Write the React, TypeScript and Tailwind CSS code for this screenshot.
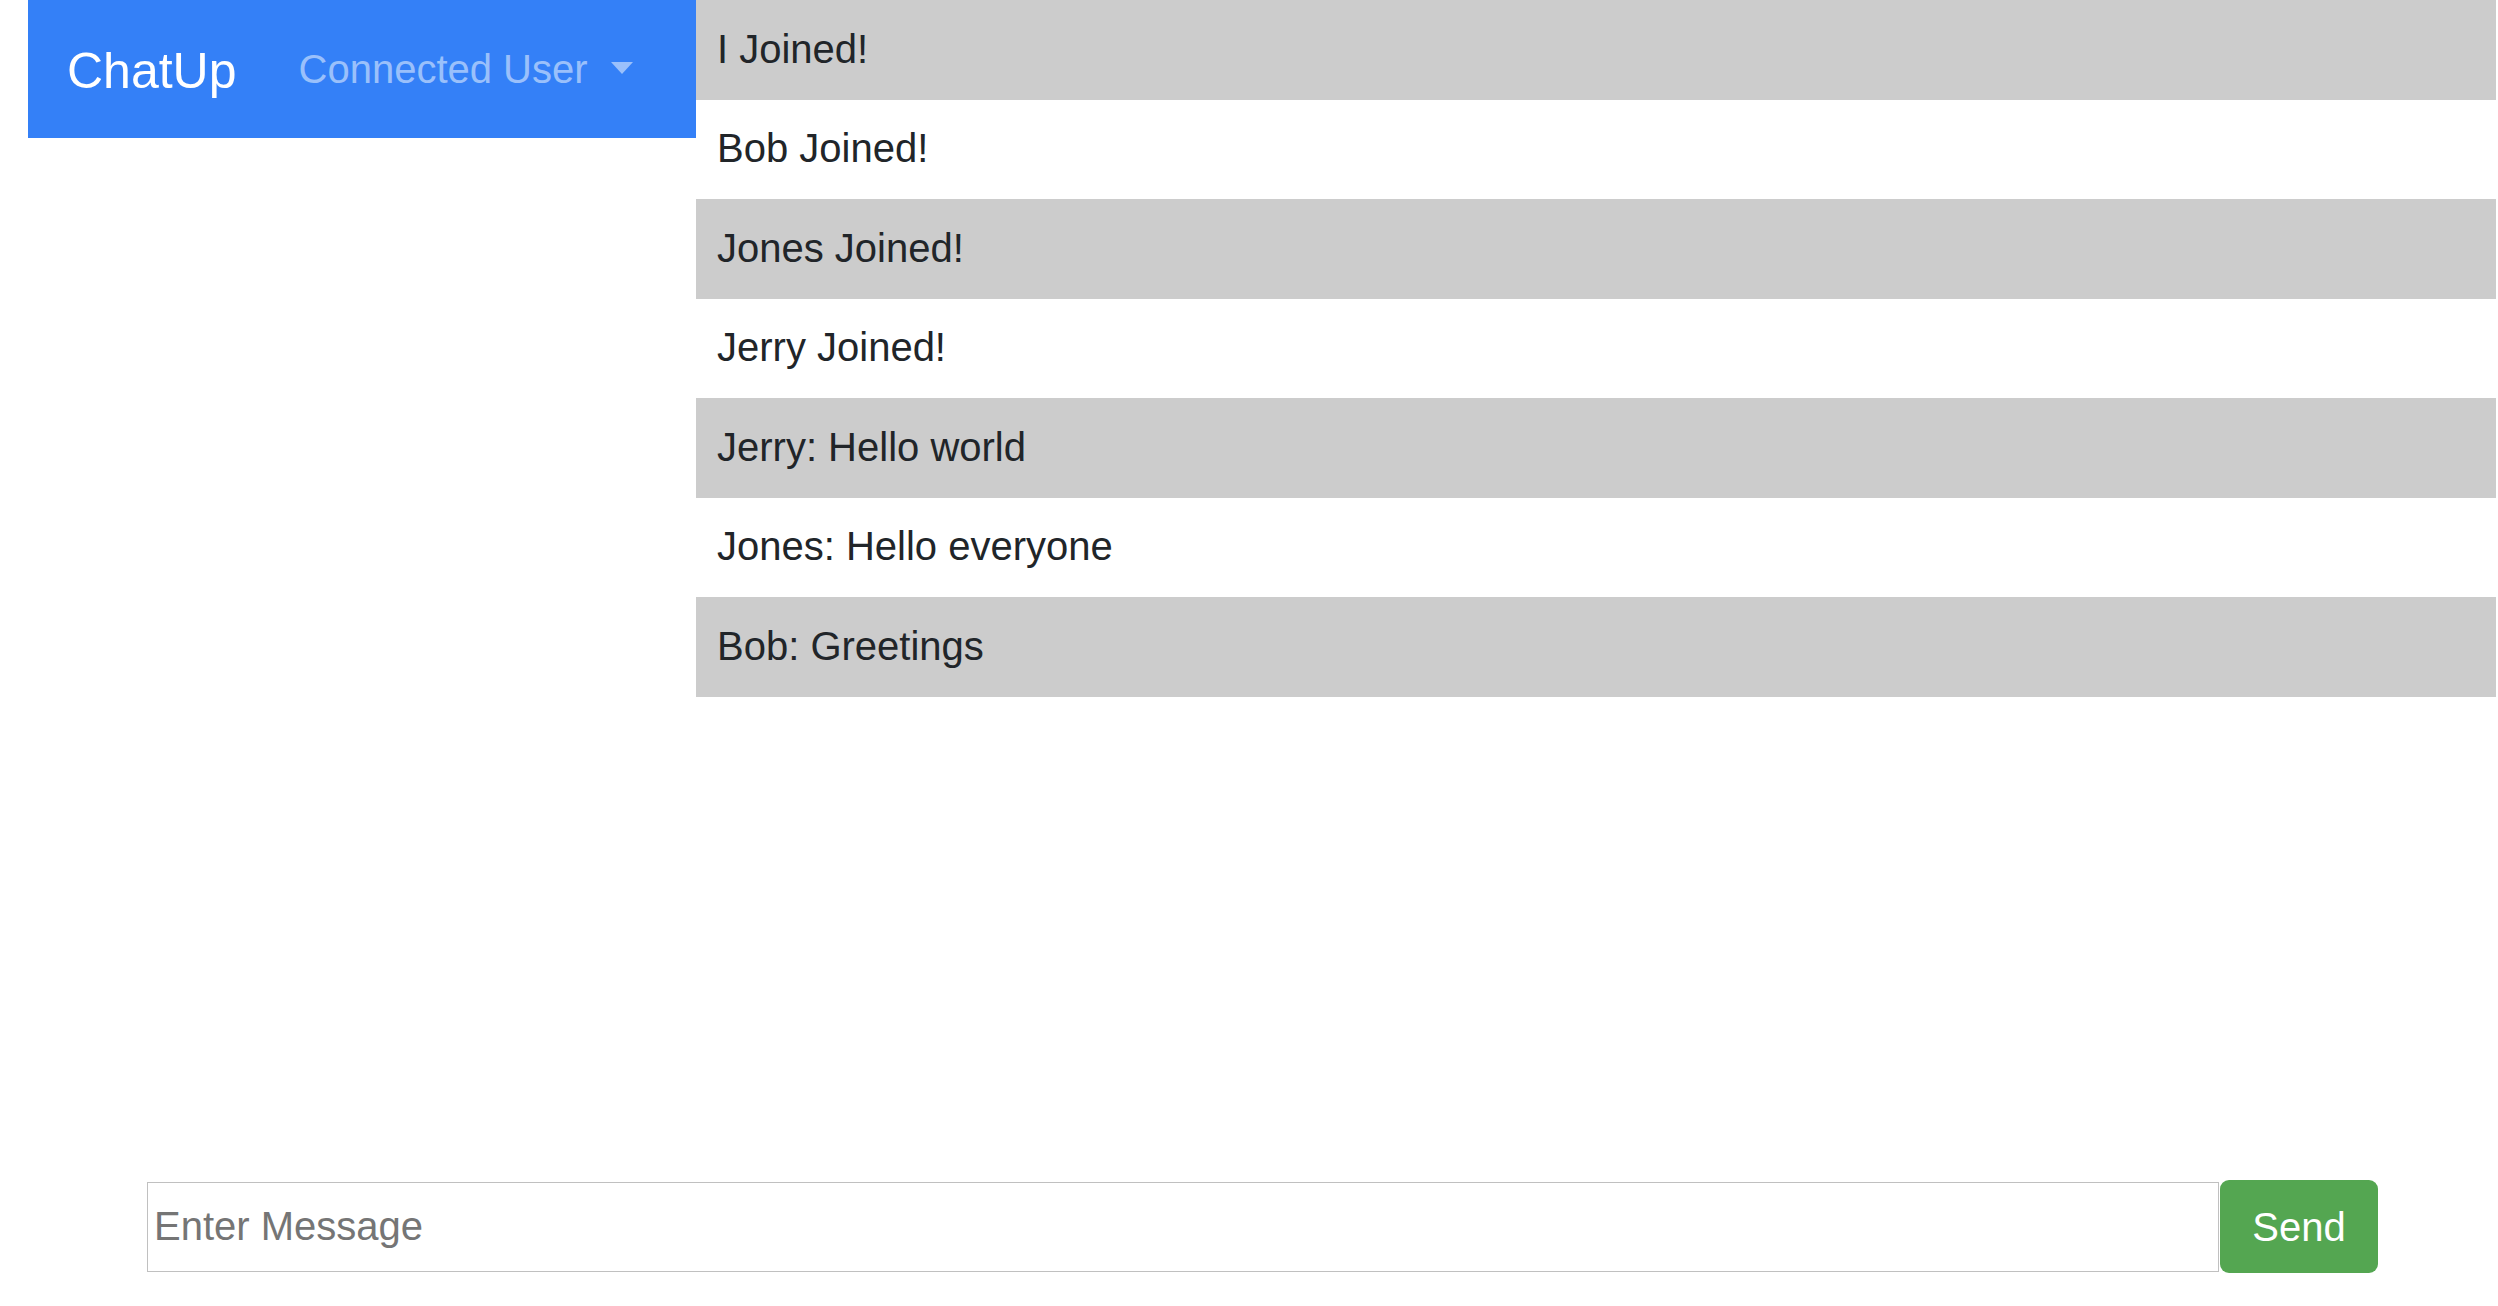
import React from "react";

const messages = [
  "I Joined!",
  "Bob Joined!",
  "Jones Joined!",
  "Jerry Joined!",
  "Jerry: Hello world",
  "Jones: Hello everyone",
  "Bob: Greetings",
];

export default function App() {
  return (
    <div
      className="flex h-[1306px] w-full flex-col bg-white text-[#212529]"
      style={{ fontFamily: '"Liberation Sans", Arial, sans-serif' }}
    >
      <div className="flex pl-[28px] pr-[2px]">
        <nav className="flex h-[138px] w-[668px] shrink-0 items-center bg-[#3480f7] pl-[39px]">
          <span className="mt-[4px] text-[50px] leading-none text-white">ChatUp</span>
          <span className="ml-[62px] mt-[-1px] flex items-center text-[40px] leading-none text-[#9ac0fb]">
            Connected User
            <span className="ml-[23px] mt-[-2px] h-0 w-0 border-x-[11.5px] border-t-[12px] border-x-transparent border-t-[#9ac0fb]" />
          </span>
        </nav>
        <ul className="flex flex-1 flex-col">
          {messages.map((m, i) => (
            <li
              key={i}
              className={`flex h-[99.5px] items-center pb-[2px] pl-[21px] text-[40px] leading-none ${
                i % 2 === 0 ? "bg-[#cccccc]" : "bg-white"
              }`}
            >
              {m}
            </li>
          ))}
        </ul>
      </div>
      <div className="flex-1" />
      <div className="flex items-center pb-[33px] pl-[147px]">
        <input
          className="h-[90px] w-[2072px] border border-[#c0c0c0] bg-white pl-[6px] text-[40px] text-[#212529] outline-none placeholder:text-[#757575]"
          placeholder="Enter Message"
          style={{ fontFamily: '"Liberation Sans", Arial, sans-serif' }}
        />
        <button
          className="ml-[1px] flex h-[93px] w-[158px] items-center justify-center rounded-[9px] bg-[#54a651] text-[40px] text-white"
          style={{ fontFamily: '"Liberation Sans", Arial, sans-serif' }}
        >
          Send
        </button>
      </div>
    </div>
  );
}
